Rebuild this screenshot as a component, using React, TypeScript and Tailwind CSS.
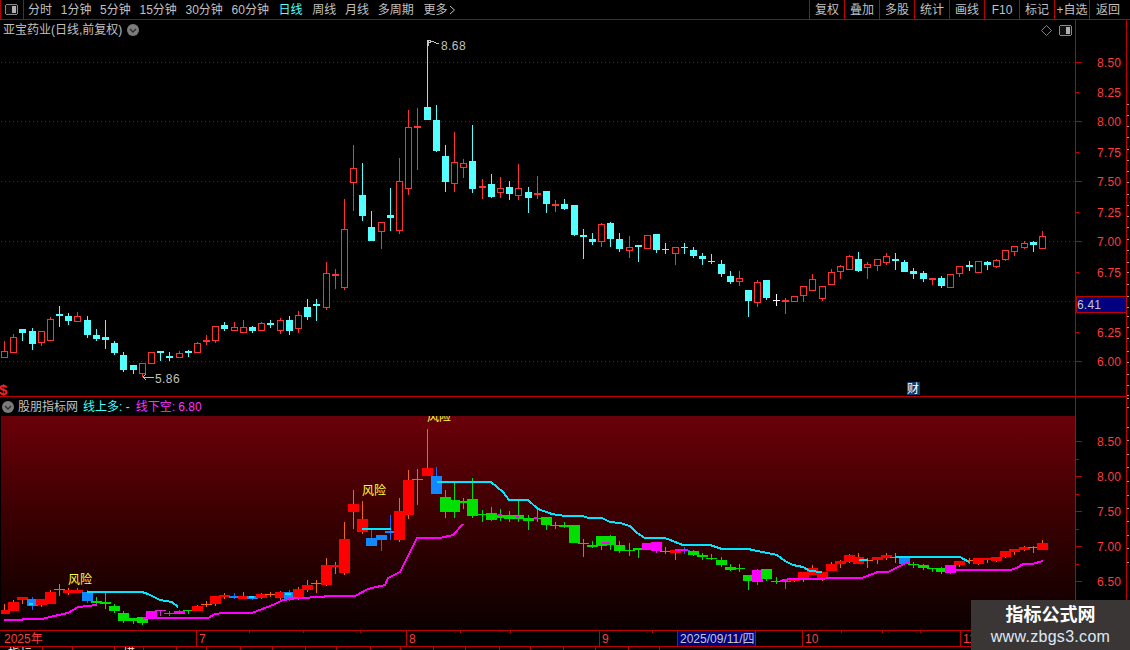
import React from "react";

// one row per day: wick high, body top, body bottom, wick low (y in page px of the upper chart)
// kind: first letter = upper candle (r red, c cyan, w white), second = lower candle colour
type Candle = [number, number, number, number, string];

const candles: Candle[] = [
  [341, 351, 357, 357, "rR"], [334, 337, 352, 352, "rR"], [329, 329, 333, 341, "cR"], [328, 331, 344, 350, "cB"],
  [331, 331, 342, 346, "rR"], [317, 319, 340, 340, "rR"], [306, 314, 316, 327, "cR"], [313, 316, 321, 325, "cR"],
  [312, 316, 321, 321, "rR"], [316, 320, 335, 338, "cB"], [329, 335, 339, 341, "cG"], [320, 337, 340, 349, "cG"],
  [341, 343, 353, 355, "cG"], [352, 355, 370, 372, "cG"], [365, 365, 370, 374, "cG"], [363, 363, 373, 377, "rG"],
  [352, 352, 363, 364, "rM"], [351, 351, 353, 361, "cM"], [352, 356, 358, 361, "cM"], [351, 353, 357, 358, "rM"],
  [350, 351, 353, 357, "cG"], [342, 343, 352, 353, "rR"], [335, 340, 342, 345, "rR"], [326, 326, 340, 343, "rR"],
  [322, 325, 329, 331, "cR"], [322, 327, 330, 331, "rB"], [320, 327, 332, 332, "rR"], [326, 327, 331, 333, "cB"],
  [322, 323, 330, 331, "rR"], [320, 323, 325, 328, "cR"], [318, 320, 330, 334, "rR"], [316, 320, 331, 335, "cB"],
  [311, 315, 328, 333, "rR"], [299, 307, 317, 320, "cR"], [299, 304, 306, 321, "cR"], [262, 273, 307, 310, "rR"],
  [269, 274, 276, 289, "rR"], [199, 229, 287, 290, "rR"], [145, 168, 182, 211, "rR"], [163, 195, 216, 221, "cR"],
  [211, 227, 241, 241, "cB"], [222, 222, 231, 249, "rB"], [188, 215, 218, 231, "cB"], [158, 181, 230, 234, "rR"],
  [110, 127, 188, 195, "rR"], [108, 126, 128, 170, "rR"], [40, 107, 120, 120, "cR"], [105, 120, 151, 152, "cB"],
  [145, 156, 182, 192, "cG"], [132, 162, 183, 192, "rG"], [159, 163, 167, 178, "rG"], [125, 161, 189, 193, "cG"],
  [179, 186, 188, 199, "rG"], [174, 184, 197, 198, "cG"], [177, 188, 192, 198, "rG"], [181, 187, 194, 200, "cG"],
  [164, 188, 195, 200, "rG"], [187, 192, 198, 213, "cG"], [176, 193, 195, 199, "rG"], [191, 191, 204, 213, "cG"],
  [200, 204, 206, 212, "rG"], [199, 204, 209, 210, "cG"], [205, 205, 235, 236, "cG"], [229, 235, 237, 259, "cG"],
  [233, 239, 242, 245, "cG"], [223, 224, 241, 247, "rG"], [222, 223, 239, 247, "cG"], [233, 239, 249, 252, "cG"],
  [236, 247, 250, 258, "rG"], [245, 245, 247, 262, "cG"], [235, 235, 248, 248, "rM"], [234, 234, 250, 253, "cM"],
  [243, 249, 250, 254, "cG"], [247, 247, 253, 265, "rR"], [243, 247, 248, 254, "cB"], [247, 250, 256, 258, "cG"],
  [253, 256, 259, 265, "cG"], [254, 261, 262, 264, "cG"], [260, 264, 274, 277, "cG"], [271, 276, 282, 284, "cG"],
  [271, 278, 281, 286, "rG"], [290, 290, 301, 317, "cG"], [280, 282, 302, 307, "rM"], [280, 280, 298, 300, "cG"],
  [294, 300, 301, 306, "wG"], [298, 300, 302, 314, "rM"], [296, 296, 301, 302, "rR"], [286, 286, 295, 302, "rR"],
  [274, 279, 290, 290, "rR"], [286, 286, 298, 301, "rR"], [269, 272, 284, 284, "rR"], [265, 266, 271, 279, "rR"],
  [255, 256, 269, 270, "rR"], [252, 259, 271, 272, "cR"], [262, 264, 267, 279, "rR"], [259, 259, 265, 271, "rR"],
  [253, 256, 262, 265, "rR"], [253, 259, 261, 270, "cR"], [260, 262, 272, 272, "cB"], [268, 271, 274, 279, "cG"],
  [271, 273, 279, 282, "cG"], [278, 278, 280, 285, "rG"], [276, 278, 286, 288, "cG"], [274, 274, 287, 288, "rM"],
  [266, 266, 273, 277, "rR"], [261, 265, 267, 271, "cR"], [261, 261, 272, 273, "rR"], [261, 262, 265, 270, "cR"],
  [259, 260, 266, 268, "rR"], [250, 250, 259, 261, "rR"], [246, 246, 251, 256, "rR"], [241, 243, 247, 249, "rR"],
  [241, 242, 245, 252, "cR"], [231, 236, 248, 248, "rR"],
];

const cx = (i: number) => Math.round(4.3 + i * 9.186 - 0.3);
const yl = (y: number) => Math.round(546.3 + (y - 241.3) * 0.5833);

const lowFill: Record<string, string> = { R: "#ff0000", G: "#00e000", B: "#1088ff", M: "#ff00ff" };
const lowWick: Record<string, string> = { R: "#f2661a", G: "#00e000", B: "#1a66ff", M: "#e020e0" };

const cyanLines = [
  "87,592 142,592 148,594 160,600 172,602 178,607",
  "29,604 33,604",
  "249,597 254,597",
  "285,594 291,594",
  "362,529 391,529",
  "437,482 491,482 497,487 503,492 509,500 528,500 538,509 552,514 565,516 583,516 588,518 602,518 610,522 620,523 630,526 637,533 645,538 665,538 683,545 710,545 722,549 748,549 777,555 785,561 793,565 803,567 810,571 822,572",
  "859,560 868,560",
  "895,557 960,557 969,562",
];

const magentaLines = [
  "4,620 22,620 23,619 42,619 50,617 63,614 68,613 78,607 97,605",
  "143,618 208,618 215,614 223,613 252,613 257,611 265,608 275,604 283,600 298,598 322,597 327,596 355,596 368,589 385,585 388,578 400,572 417,538 440,538 453,535 463,524",
  "498,515 502,515",
  "516,517 519,517",
  "534,518 538,518",
  "602,543 610,543",
  "675,550 688,550",
  "780,581 790,579 862,578 870,575 878,572 888,572 898,567 910,561",
  "955,570 1010,570 1017,568 1023,564 1032,564 1043,561",
];

const upperGrid = [62, 121, 181, 241, 301, 361];

const upperAxis: [number, string][] = [
  [62, "8.50"], [92, "8.25"], [121, "8.00"], [152, "7.75"], [181, "7.50"], [212, "7.25"],
  [241, "7.00"], [272, "6.75"], [332, "6.25"], [361, "6.00"],
];
const lowerAxis: [number, string][] = [
  [441, "8.50"], [476, "8.00"], [511, "7.50"], [546, "7.00"], [581, "6.50"],
];
const ruler = [
  30, 45, 60, 75, 90, 105, 120, 135, 150, 165, 180, 195, 210, 225, 241, 255, 271, 286, 301, 313, 328, 343, 360, 375, 390,
  405, 419, 423, 434, 461, 479, 497, 515, 533, 552, 569, 587, 605, 623, 641,
];

const leftTabs = ["分时", "1分钟", "5分钟", "15分钟", "30分钟", "60分钟", "日线", "周线", "月线", "多周期"];
const rightTabs = ["复权", "叠加", "多股", "统计", "画线", "F10", "标记", "+自选"];
const dateMarks: [number, string][] = [[196, "7"], [406, "8"], [599, "9"], [802, "10"], [960, "11"]];
const dateTicks = [249, 303, 360, 460, 510, 652, 841, 882, 920, 1010];
const bottomCells = [43, 30, 42, 29, 33, 30, 34, 32, 33, 31, 34, 30, 33, 32, 34, 31, 33, 32, 33, 31];

function PanelIcon() {
  return (
    <svg width="13" height="11" viewBox="0 0 13 11" shapeRendering="crispEdges">
      <rect x="0.5" y="0.5" width="12" height="10" rx="2" fill="#101010" stroke="#8a8a8a" />
      <rect x="7" y="2" width="4" height="7" fill="#b0b0b0" />
    </svg>
  );
}

function Chevron() {
  return (
    <svg width="12" height="12" viewBox="0 0 12 12">
      <circle cx="6" cy="6" r="6" fill="#7c7c7c" />
      <path d="M3 5 L6 8 L9 5" fill="none" stroke="#2e2e2e" strokeWidth="1.4" />
    </svg>
  );
}

function UpperChart() {
  return (
    <svg width="1075" height="357" viewBox="0 39 1075 357" shapeRendering="crispEdges" className="block">
      {upperGrid.map((y) => (
        <line key={y} x1="1" x2="1075" y1={y + 0.5} y2={y + 0.5} stroke="#8a0a0a" strokeDasharray="1 3" />
      ))}
      {candles.map(([hi, top, bot, lo, kind], i) => {
        const x = cx(i);
        const color = kind[0] === "r" ? "#ff3232" : kind[0] === "w" ? "#ffffff" : "#54ffff";
        const hollow = kind[0] === "r" && bot - top > 2;
        return (
          <g key={i}>
            {hi < top && <rect x={x} y={hi} width="1" height={top - hi} fill={color} />}
            {lo > bot && <rect x={x} y={bot} width="1" height={lo - bot} fill={color} />}
            {hollow ? (
              <rect x={x - 2.5} y={top + 0.5} width="6" height={bot - top} fill="#000" stroke={color} />
            ) : (
              <rect x={x - 3} y={top} width="7" height={Math.max(bot - top, 1)} fill={color} />
            )}
          </g>
        );
      })}
      <path d="M428 40 V46 M428 40 H431 M429 43 L432 41 L436 43 L439 44" fill="none" stroke="#c0c0c0" />
      <text x="441" y="50" fontSize="12" fill="#c0c0c0" letterSpacing="0.4">8.68</text>
      <path d="M143 377 H154 M143 377 L146 374 M143 377 L146 380" fill="none" stroke="#c0c0c0" />
      <text x="155" y="383" fontSize="12" fill="#c0c0c0" letterSpacing="0.4">5.86</text>
      <text x="-1" y="395" fontSize="15" fontWeight="700" fill="#ff2020">$</text>
      <rect x="907" y="382" width="13" height="13" fill="#0a3a6e" />
      <text x="907" y="393" fontSize="12" fill="#ffffff">财</text>
    </svg>
  );
}

function LowerChart() {
  return (
    <svg width="1074" height="214" viewBox="1 416 1074 214" shapeRendering="crispEdges" className="block">
      {candles.map(([hi, top, bot, lo, kind], i) => {
        const x = cx(i);
        const t = yl(top);
        const h = Math.max(yl(bot) - t, 1);
        const c = kind[1];
        return (
          <g key={i}>
            <rect x={x} y={yl(hi)} width="1" height={Math.max(yl(lo) - yl(hi), 1)} fill={lowWick[c]} />
            <rect x={x - 5} y={t} width="11" height={h} fill={h === 1 ? lowWick[c] : lowFill[c]} />
          </g>
        );
      })}
      {cyanLines.map((p) => (
        <polyline key={p} points={p} fill="none" stroke="#00e8ff" strokeWidth="2" />
      ))}
      {magentaLines.map((p) => (
        <polyline key={p} points={p} fill="none" stroke="#ff00ff" strokeWidth="2" />
      ))}
      <text x="68" y="584" fontSize="12" fill="#ffff40">风险</text>
      <text x="362" y="495" fontSize="12" fill="#ffff40">风险</text>
      <text x="427" y="421" fontSize="12" fill="#ffff40">风险</text>
    </svg>
  );
}

function Axis({ y0, h, marks, long, short, box }: { y0: number; h: number; marks: [number, string][]; long: number[]; short: number[]; box?: boolean }) {
  return (
    <svg width="50" height={h} viewBox={`1076 ${y0} 50 ${h}`} shapeRendering="crispEdges" className="block">
      {long.map((y) => (
        <line key={y} x1="1076" x2="1082" y1={y + 0.5} y2={y + 0.5} stroke="#c00000" />
      ))}
      {short.map((y) => (
        <line key={y} x1="1076" x2="1079" y1={y + 0.5} y2={y + 0.5} stroke="#c00000" />
      ))}
      {marks.map(([y, t]) => (
        <text key={t} x="1097" y={y + 5} fontSize="12" fill="#ff3c3c" letterSpacing="0.2">{t}</text>
      ))}
      {box && (
        <>
          <rect x="1076" y="296.5" width="50" height="16" fill="#000080" stroke="#c00000" />
          <text x="1077" y="309" fontSize="12" fill="#c8c8c8" letterSpacing="0.2">6.41</text>
        </>
      )}
    </svg>
  );
}

export default function App() {
  return (
    <div className="relative w-[1130px] h-[650px] overflow-hidden bg-black text-xs leading-none text-[#c0c0c0] font-['Liberation_Sans','Noto_Sans_CJK_SC',sans-serif]">
      {/* top toolbar */}
      <div className="flex h-[20px] items-stretch border-b border-[#b80000]">
        <div className="flex w-[24px] items-center justify-center border-x border-[#b80000] pr-[1px]">
          <PanelIcon />
        </div>
        <div className="flex flex-1 items-center gap-[8.7px] pl-[4px]">
          {leftTabs.map((t) => (
            <span key={t} className={t === "日线" ? "mx-[1px] text-[#54ffff]" : ""}>{t}</span>
          ))}
          <span className="ml-[1px] flex items-center gap-[2px]">
            更多
            <svg width="7" height="10" viewBox="0 0 7 10">
              <path d="M1 1 L5.5 5 L1 9" fill="none" stroke="#c0c0c0" />
            </svg>
          </span>
        </div>
        <div className="flex">
          {rightTabs.map((t) => (
            <span key={t} className="flex w-[35px] items-center justify-center border-l border-[#b80000]">{t}</span>
          ))}
          <span className="flex w-[41px] items-center justify-center border-l border-[#b80000] pr-[4px]">返回</span>
        </div>
      </div>

      {/* charts + price axis + ruler */}
      <div className="flex h-[610px]">
        <div className="flex w-[1075px] flex-col">
          <div className="h-[377px] border-b border-[#c00000]">
            <div className="flex h-[19px] items-center justify-between pl-[3px] pr-[3px]">
              <div className="flex items-center gap-[5px]">
                <span>亚宝药业(日线,前复权)</span>
                <Chevron />
              </div>
              <div className="flex items-center gap-[7px] pt-[2px]">
                <svg width="11" height="11" viewBox="0 0 11 11">
                  <path d="M5.5 0.5 L10.5 5.5 L5.5 10.5 L0.5 5.5 Z" fill="none" stroke="#808080" />
                </svg>
                <PanelIcon />
              </div>
            </div>
            <UpperChart />
          </div>
          <div className="flex h-[19px] items-center gap-[5px] pl-[2px]">
            <Chevron />
            <span className="-ml-[1px]">股朋指标网</span>
            <span className="text-[#40ffff]">线上多: -</span>
            <span className="ml-[1px] text-[#ff30ff]">线下空: 6.80</span>
          </div>
          <div className="ml-[1px] flex-1 bg-gradient-to-b from-[#6b0009] to-[#0c0000]">
            <LowerChart />
          </div>
        </div>
        <div className="flex w-[52px] flex-col border-x border-[#c00000]">
          <div className="h-[377px] border-b border-[#c00000]">
            <Axis
              y0={20}
              h={376}
              marks={upperAxis}
              long={upperGrid}
              short={[92, 152, 212, 272, 332]}
              box
            />
          </div>
          <Axis
            y0={397}
            h={233}
            marks={lowerAxis}
            long={[441, 476, 511, 546, 581]}
            short={[459, 494, 529, 564, 616]}
          />
        </div>
        <svg width="4" height="610" viewBox="0 20 4 610" shapeRendering="crispEdges" className="block">
          {ruler.map((y) => (
            <line key={y} x1="0" x2={y % 5 === 0 ? 3 : 2} y1={y + 0.5} y2={y + 0.5} stroke="#d0d0d0" />
          ))}
        </svg>
      </div>

      {/* date axis */}
      <div className="flex h-[17px] w-[1127px] border-y border-[#c00000] text-[#ff3c3c]">
        <div className="relative h-full w-[1075px]">
          <span className="absolute left-[4px] top-[2px]">2025年</span>
          {dateMarks.map(([x, t]) => (
            <span key={t} className="absolute top-0 h-full border-l border-[#c00000] pl-[2px] pt-[2px]" style={{ left: x }}>{t}</span>
          ))}
          {dateTicks.map((x) => (
            <span key={x} className="absolute top-0 h-[2px] w-px bg-[#c00000]" style={{ left: x }} />
          ))}
          <span className="absolute left-[677px] top-0 h-full w-[79px] border-x border-[#c00000] bg-[#000080] pl-[2px] pt-[2px] text-[#c8c8c8]">2025/09/11/四</span>
        </div>
        <div className="w-[52px] border-x border-[#c00000]" />
      </div>

      {/* bottom tab strip, only its top edge fits in the window */}
      <div className="flex h-[3px] overflow-hidden text-[#e8e8e8]">
        {bottomCells.map((w, i) => (
          <div key={i} className="border-r border-[#c00000] pl-[8px] pt-[1px]" style={{ width: w }}>
            {i === 0 ? "指标" : i === 3 ? "模板" : ""}
          </div>
        ))}
      </div>

      {/* watermark */}
      <div className="absolute bottom-0 right-0 flex h-[50px] w-[159px] flex-col items-center justify-center gap-[4px] bg-[#3a3636]">
        <span className="text-[18px] font-bold leading-[20px] text-white">指标公式网</span>
        <span className="text-[16px] leading-[16px] tracking-[0.3px] text-[#dfe9f7]">www.zbgs3.com</span>
      </div>
    </div>
  );
}
